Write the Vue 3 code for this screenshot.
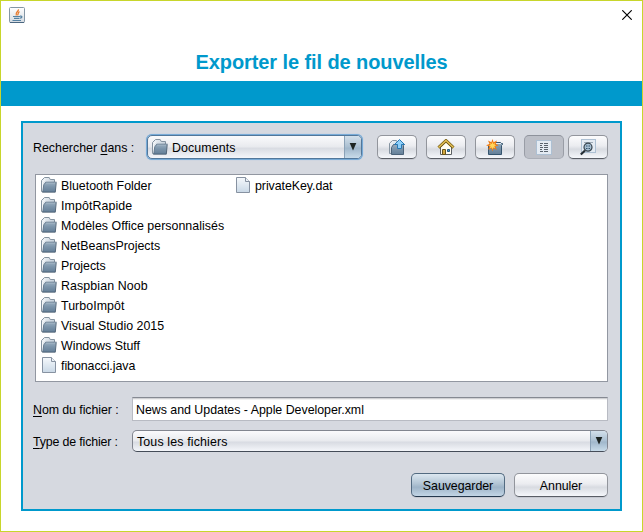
<script setup>
const entries = [
  { icon: 'folder', name: 'Bluetooth Folder', spacing: -0.02 },
  { icon: 'folder', name: 'ImpôtRapide', spacing: 0.1 },
  { icon: 'folder', name: 'Modèles Office personnalisés', spacing: 0.03 },
  { icon: 'folder', name: 'NetBeansProjects', spacing: 0 },
  { icon: 'folder', name: 'Projects', spacing: 0 },
  { icon: 'folder', name: 'Raspbian Noob', spacing: 0.1 },
  { icon: 'folder', name: 'TurboImpôt', spacing: 0.05 },
  { icon: 'folder', name: 'Visual Studio 2015', spacing: 0 },
  { icon: 'folder', name: 'Windows Stuff', spacing: 0 },
  { icon: 'file', name: 'fibonacci.java', spacing: -0.06 },
  { icon: 'file', name: 'privateKey.dat', spacing: -0.06 },
]
</script>

<template>
  <svg class="defs" width="0" height="0" aria-hidden="true">
    <defs>
      <linearGradient id="gFront" x1="0" y1="0" x2="0" y2="1">
        <stop offset="0" stop-color="#9aaec0" />
        <stop offset="0.45" stop-color="#7b94aa" />
        <stop offset="1" stop-color="#647f98" />
      </linearGradient>
      <linearGradient id="gBack" x1="0" y1="0" x2="1" y2="1">
        <stop offset="0" stop-color="#f4f7fa" />
        <stop offset="1" stop-color="#a9b9c8" />
      </linearGradient>
      <linearGradient id="gPage" x1="0" y1="0" x2="0" y2="1">
        <stop offset="0" stop-color="#f6f9fc" />
        <stop offset="1" stop-color="#c9d8e6" />
      </linearGradient>
      <linearGradient id="gJava" x1="0" y1="0" x2="0" y2="1">
        <stop offset="0" stop-color="#ffffff" />
        <stop offset="1" stop-color="#d5dbe1" />
      </linearGradient>
      <symbol id="folder" viewBox="0 0 16 16">
        <path d="M.5 14.5V3.5L3.5.5h4.7l1 2h4.3v2.5L3 14.5z" fill="url(#gBack)" stroke="#8593a0" />
        <path d="M1.5 14V5.5L4 2.5" fill="none" stroke="#fff" stroke-opacity=".7" />
        <path d="M4.4 5.5H15l-.9 9.5H1.8l1-7z" fill="url(#gFront)" />
        <path d="M1.8 14.5l1-6.7 2-2.6H15.6" fill="none" stroke="#5d7388" stroke-width=".9" />
        <path d="M5 6.2h9.3" stroke="#a3b5c5" stroke-width=".8" />
        <path d="M15.2 5.5l-.9 9.7H1.2" fill="none" stroke="#43586c" stroke-width=".9" />
      </symbol>
      <symbol id="file" viewBox="0 0 16 16">
        <path d="M1.5.5h9l4 4v11h-13z" fill="url(#gPage)" stroke="#8792a1" />
        <path d="M10.5.5v4h4" fill="#edf2f7" stroke="#8792a1" />
      </symbol>
    </defs>
  </svg>

  <div class="window">
    <header class="titlebar">
      <svg class="java" width="16" height="16" viewBox="0 0 16 16">
        <rect x=".5" y=".5" width="15" height="15" rx="1" fill="url(#gJava)" stroke="#8496a5" />
        <path d="M1 15.5h14" stroke="#4a6680" />
        <path d="M9.5 2.3C9.8 4.5 6 5 7.3 8.4M10.5 4.6C8.5 5.5 9.7 6.8 8.5 8.3" fill="none" stroke="#e8792b" stroke-width="1.3" />
        <path d="M4 9.5h7M5 11.4h5.5M3.5 13.5h8.5M11 9.2c2.7-.6 2.4 1.7 0 2" fill="none" stroke="#5582a3" stroke-width="1.2" />
      </svg>
      <svg class="close" width="10" height="10" viewBox="0 0 10 10">
        <path d="M.3.3l9.4 9.4M9.7.3L.3 9.7" stroke="#000" stroke-width="1.15" />
      </svg>
    </header>
    <h1>Exporter le fil de nouvelles</h1>
    <div class="band"></div>

    <main class="panel">
      <div class="toolbar">
        <label class="look">Rechercher <u>d</u>ans :</label>
        <div class="combo focused">
          <svg class="ico" width="16" height="16"><use href="#folder" /></svg>
          <span class="combo-text docs">Documents</span>
          <span class="arrow"><svg width="8" height="8" viewBox="0 0 8 8"><path d="M.7 0h6.6L4 7.5z" fill="#1d2422" /></svg></span>
        </div>
        <button class="tool up">
          <svg width="18" height="16" viewBox="0 0 18 16">
            <path d="M1.5 14.5V4.3L4.5 1.5h4l1 2h5v3L4 14.5z" fill="url(#gBack)" stroke="#8593a0" />
            <path d="M5.5 5.5h11l-1 1v9H3.5V8.5z" fill="url(#gFront)" stroke="#4c6379" />
            <path d="M11.5.5l5 5h-3v4h-4v-4h-3z" fill="#8fd0fa" stroke="#2879b3" />
          </svg>
        </button>
        <button class="tool home">
          <svg width="18" height="16" viewBox="0 0 18 16">
            <path d="M3.5 8L9 3l5.5 5v7.5h-11z" fill="#fffdf4" stroke="#5b6064" />
            <path d="M1.5 8.7L9 1.6l7.5 7.1" fill="none" stroke="#725a13" stroke-width="3" />
            <path d="M1.5 8.5L9 1.5l7.5 7" fill="none" stroke="#e3bf55" stroke-width="1.5" />
            <path d="M5.5 15.5v-5h3v5z" fill="#d3a83e" stroke="#69551c" />
            <path d="M10.5 10.5h2v2h-2z" fill="#4d9dd4" stroke="#24587e" />
          </svg>
        </button>
        <button class="tool fresh">
          <svg width="18" height="17" viewBox="0 0 18 17">
            <path d="M2.5 15.5V6.5l2-2h4l1-1h5l1 1h1v1l-1 1v9z" fill="url(#gFront)" stroke="#35556f" />
            <path d="M10 4.5h5" stroke="#e4ebf0" />
            <path d="M6.5 0l1.1 3.2L11 1.4 9.6 5l3.1 1.2-3.3 1.2 1.4 3.5-3.3-1.6L6.5 12.4 5.3 9.3 2 10.8l1.4-3.3L0 6.2 3.5 5 2 1.5l3.4 1.7z" fill="#f07a12" />
            <path d="M6.5 2.5l.8 2.4 2-.8-.8 2 1.8.6-2 .6.8 2-1.9-.8-.7 1.9-.7-2-2 .9.8-2-2-.6 2-.7-.8-1.9 2 .8z" fill="#ffd65b" />
          </svg>
        </button>
        <button class="tool pressed">
          <svg width="16" height="15" viewBox="0 0 16 15">
            <rect x=".5" y=".5" width="15" height="14" fill="#e4ebf3" stroke="#adc0d3" />
            <path d="M4 3.5h3M4 5.5h2M4 7.5h3M4 9.5h2M4 11.5h3M8 3.5h4M8 5.5h4M8 7.5h4M8 9.5h4M8 11.5h4" stroke="#59636d" />
          </svg>
        </button>
        <button class="tool detail">
          <svg width="16" height="17" viewBox="0 0 16 17">
            <rect x="1.5" y=".5" width="14" height="13" fill="#e4ebf3" stroke="#adc0d3" />
            <path d="M4 3.5h9" stroke="#9fabb7" />
            <path d="M5 11.5L.8 15.5" stroke="#252d34" stroke-width="2.2" />
            <circle cx="8" cy="8.2" r="4" fill="#a5bed2" stroke="#38454f" stroke-width="1.2" />
            <path d="M6 7h1.5M8.5 7H10M6 9.5h1.5M8.5 9.5H10" stroke="#34536b" />
          </svg>
        </button>
      </div>

      <div class="list">
        <div v-for="e in entries" :key="e.name" class="entry">
          <svg class="ico" width="16" height="16"><use :href="'#' + e.icon" /></svg>
          <span :style="{ letterSpacing: e.spacing + 'px' }">{{ e.name }}</span>
        </div>
      </div>

      <div class="form">
        <label class="name-label"><u>N</u>om du fichier :</label>
        <div class="field"><span>News and Updates - Apple Developer.xml</span></div>
        <label class="type-label"><u>T</u>ype de fichier :</label>
        <div class="combo type">
          <span class="combo-text all">Tous les fichiers</span>
          <span class="arrow"><svg width="8" height="8" viewBox="0 0 8 8"><path d="M.7 0h6.6L4 7.5z" fill="#1d2422" /></svg></span>
        </div>
      </div>

      <div class="actions">
        <button class="btn primary"><span>Sauvegarder</span></button>
        <button class="btn"><span>Annuler</span></button>
      </div>
    </main>
  </div>
</template>

<style>
body { margin: 0; background: #fff; overflow: hidden; }
</style>

<style scoped>
* { box-sizing: border-box; }
.defs { display: block; height: 0; }
.window {
  width: 643px; height: 532px; border: 1px solid #c8d62b; background: #fff;
  font: 12.4px/20px "Liberation Sans", Arial, sans-serif; color: #000;
}
svg { display: block; flex: none; }
.titlebar { display: flex; justify-content: space-between; height: 46px; padding: 6px 10px 0 8px; }
.close { margin-top: 3px; }
h1 { margin: 0; height: 34px; font-size: 20px; line-height: 30px; text-align: center; color: #0099cc; letter-spacing: -.09px; }
.band { height: 25px; background: #0099cc; }
.panel {
  width: 601px; height: 390px; margin: 15px 0 0 20px; padding: 11px 12px 0 10px;
  border: 2px solid #0099cc; background: #d6d9e0;
}
.toolbar { display: flex; align-items: center; height: 26px; }
.look { width: 114px; padding-top: 2px; white-space: nowrap; }
.name-label, .type-label { padding-top: 2px; white-space: nowrap; }
.name-label { letter-spacing: -.08px; }
.type-label { letter-spacing: -.16px; }
u { text-decoration: underline; text-underline-offset: 2px; text-decoration-thickness: 1px; text-decoration-skip-ink: none; }
.combo {
  display: flex; align-items: center; border: 1px solid #81858f; border-bottom-color: #454c58; border-radius: 5px;
  background: linear-gradient(#fafafc, #e8eaee 50%, #d8dbe2 55%, #f4f6fa); overflow: hidden;
}
.focused {
  width: 215px; height: 24px; padding-left: 4px; border-color: #52779a;
  box-shadow: 0 0 0 1px #78abd7, 0 0 1px 1px #8ab6dc;
}
.combo-text { flex: 1; padding-top: 1px; }
.docs { padding-left: 4px; letter-spacing: .1px; }
.arrow {
  width: 17px; height: 100%; display: flex; align-items: center; justify-content: center;
  border-left: 1px solid #8ba2b7; background: linear-gradient(#d3e0eb, #aabfd1 50%, #a0b7cb 55%, #c8dbe9);
}
.tool, .btn {
  display: flex; align-items: center; justify-content: center; padding: 0;
  border: 1px solid #92959c; border-bottom-color: #595d65; border-radius: 5px;
  background: linear-gradient(#fcfcfd, #ebecf0 45%, #d8dbe1 60%, #f5f7fb);
  font: inherit; color: #000; box-shadow: 0 1px 0 #c5c8d0;
}
.tool { flex: none; width: 40px; height: 24px; margin-right: 9px; }
.tool.up { margin-left: 15px; }
.tool.pressed { margin-right: 4px; border-color: #8e929b #999da6 #aaaeb7; background: #bcbfc7; box-shadow: none; }
.tool.detail { margin-right: 0; }
.list {
  display: flex; flex-flow: column wrap; align-content: flex-start; width: 573px; height: 208px;
  margin: 14px 0 0 2px; padding: 0 5px 6px; border: 1px solid #9297a1; background: #fff;
}
.entry { display: flex; align-items: center; gap: 4px; width: 194px; height: 20px; white-space: nowrap; }
.entry span { padding-top: 1px; }
.form { display: grid; grid-template-columns: 99px 476px; grid-template-rows: 24px 22px; row-gap: 9px; margin-top: 15px; align-items: center; }
.field {
  height: 24px; padding: 2px 3px 0; border: 1px solid #b8bbc3; border-top-color: #858992; background: #fff;
  box-shadow: inset 0 1px 0 #cfd0d3, inset 0 2px 0 #f0f0f1; letter-spacing: -.02px;
}
.type { height: 22px; }
.all { padding-left: 4px; letter-spacing: .14px; }
.actions { display: flex; justify-content: flex-end; gap: 9px; margin-top: 21px; }
.btn { width: 94px; height: 24px; letter-spacing: -.06px; }
.btn span { padding-top: 1px; }
.primary { letter-spacing: -.06px; border-color: #536b81; border-bottom-color: #24384d; background: linear-gradient(#dce7f0, #b1c4d4 45%, #9eb4c8 60%, #c2d5e5); }
</style>
